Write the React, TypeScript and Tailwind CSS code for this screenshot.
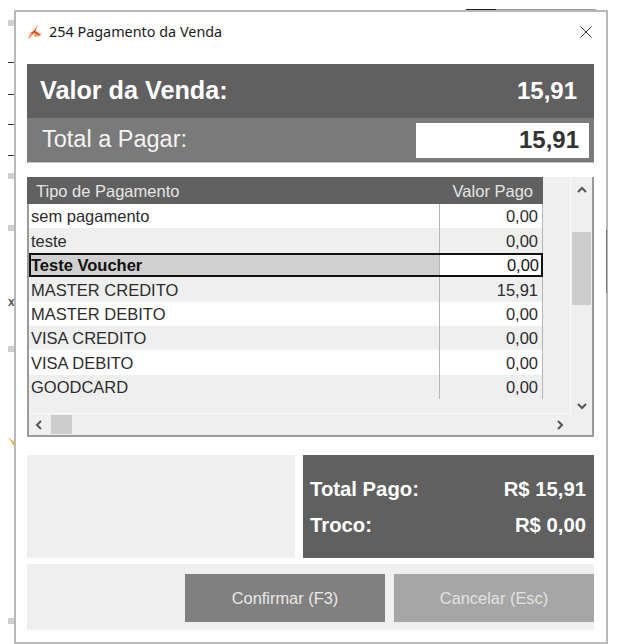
const rows = [
  { name: "sem pagamento", value: "0,00" },
  { name: "teste", value: "0,00" },
  { name: "Teste Voucher", value: "0,00", selected: true },
  { name: "MASTER CREDITO", value: "15,91" },
  { name: "MASTER DEBITO", value: "0,00" },
  { name: "VISA CREDITO", value: "0,00" },
  { name: "VISA DEBITO", value: "0,00" },
  { name: "GOODCARD", value: "0,00" },
];

function Chevron({ d }: { d: string }) {
  return (
    <svg width="10" height="10" viewBox="0 0 10 10" fill="none" stroke="#555" strokeWidth="2">
      <path d={d} />
    </svg>
  );
}

function Ticks() {
  const left = [
    { y: 20, h: 6, c: "#d0d0d0" },
    { y: 62, h: 1, c: "#333" },
    { y: 94, h: 1, c: "#333" },
    { y: 124, h: 1, c: "#333" },
    { y: 155, h: 1, c: "#333" },
    { y: 173, h: 6, c: "#d0d0d0" },
    { y: 225, h: 6, c: "#d0d0d0" },
    { y: 346, h: 6, c: "#d0d0d0" },
    { y: 618, h: 6, c: "#d0d0d0" },
  ];
  return (
    <>
      {left.map((t) => (
        <div key={t.y} className="absolute left-[8px] w-[6px]" style={{ top: t.y, height: t.h, background: t.c }} />
      ))}
      <div className="absolute left-[8px] top-[296px] text-[12px] leading-none font-bold font-['Liberation_Sans',sans-serif] text-[#555]">x</div>
      <svg className="absolute left-[8px] top-[437px]" width="6" height="9" viewBox="0 0 6 9">
        <path d="M0 0 L6 5 L6 9 Z" fill="#f0a830" />
      </svg>
      <div className="absolute left-[148px] top-[10px] h-px w-[318px] bg-[#bdbdbd]" />
      <div className="absolute left-[466px] top-[9px] h-[2px] w-[30px] bg-[#222]" />
      <div className="absolute left-[496px] top-[9px] h-[2px] w-[100px] bg-[#999]" />
      <div className="absolute left-[606px] top-[230px] z-10 w-px h-[63px] bg-[#777]" />
    </>
  );
}

export default function App() {
  return (
    <div className="relative w-[627px] h-[644px] bg-white pl-[14px] pt-[10px] font-['Liberation_Sans',sans-serif] overflow-hidden">
      <Ticks />
      <div className="relative w-[594px] h-[634px] border-2 border-[#b8b8b8] bg-white px-[11px]">
        <div className="h-[40px] flex items-center justify-between">
          <div className="flex items-center gap-[7px]">
            <svg width="15" height="16" viewBox="0 0 15 16">
              <path d="M11 0.5 L8.5 7 L14.5 11 L10.5 11 L7 9 L1 15 L3.5 9 L7.5 6 Z" fill="#e8481a" />
              <path d="M3.5 9 L1 15 L7 10 Z" fill="#f4a070" />
              <path d="M7 10 L14.5 11.5 L7.5 13 Z" fill="#f09a50" />
            </svg>
            <span className="font-['Noto_Sans',sans-serif] text-[14.4px] text-[#1a1a1a]">254 Pagamento da Venda</span>
          </div>
          <svg className="mr-[2px]" width="14" height="14" viewBox="0 0 14 14" fill="none" stroke="#333" strokeWidth="1">
            <path d="M1.5 1.5 L12.5 12.5 M12.5 1.5 L1.5 12.5" />
          </svg>
        </div>

        <div className="mt-[12px] w-[567px]">
          <div className="h-[54px] bg-[#606060] flex items-center justify-between pl-[13px] pr-[17px] text-white font-bold text-[24px]">
            <span className="text-[25.2px]">Valor da Venda:</span>
            <span>15,91</span>
          </div>
          <div className="h-[45px] bg-[#7a7a7a] border-b border-[#c4c4c4] flex items-center justify-between pl-[15px] pr-[5px] text-white">
            <span className="text-[23.5px] text-[#f4f4f4]">Total a Pagar:</span>
            <div className="w-[173px] h-[35px] bg-white flex items-center justify-end pr-[10px] text-[24px] font-bold text-[#333]">15,91</div>
          </div>
        </div>

        <div className="mt-[14px] w-[567px] h-[260px] border-2 border-t-0 border-[#9a9a9a] bg-[#efefef] text-[16.5px] relative flex flex-col">
          <div className="flex flex-1 min-h-0">
            <div className="w-[514px] shrink-0 flex flex-col">
              <div className="h-[27px] -ml-[2px] w-[516px] bg-[#606060] text-[#e6e6e6] flex items-center pt-[1px]">
                <span className="w-[411px] pl-[9px]">Tipo de Pagamento</span>
                <span className="w-[95px] text-right whitespace-nowrap">Valor Pago</span>
              </div>
              {rows.map((r, i) => {
                const stripe = i % 2 === 0 ? "bg-white" : "bg-[#efefef]";
                return r.selected ? (
                  <div key={r.name} className="h-[24.4px] flex border-[2px] border-[#111] bg-white text-[#111]">
                    <div className="w-[409px] bg-[#d0d0d0] font-bold pl-[0px] pt-[1px] flex items-center border-r border-[#b5b5b5]">{r.name}</div>
                    <div className="flex-1 flex items-center justify-end pr-[2px] pt-[1px]">{r.value}</div>
                  </div>
                ) : (
                  <div key={r.name} className={`h-[24.4px] flex text-[#2c2c2c] ${stripe}`}>
                    <div className="w-[411px] pl-[2px] pt-[1px] flex items-center border-r border-[#b5b5b5]">{r.name}</div>
                    <div className="flex-1 flex items-center justify-end pr-[4px] pt-[1px] border-r border-[#b5b5b5]">{r.value}</div>
                  </div>
                );
              })}
            </div>
            <div className="flex-1 flex justify-end">
              <div className="w-[22px] flex flex-col items-center pt-[8px] border-l border-[#fafafa]">
                <Chevron d="M1 7 L5 3 L9 7" />
                <div className="mt-[37px] w-[19px] h-[73px] bg-[#cdcdcd]" />
                <div className="mt-auto pb-[3px]">
                  <Chevron d="M1 3 L5 7 L9 3" />
                </div>
              </div>
            </div>
          </div>
          <div className="h-[21px] flex items-center pl-[5px] justify-between">
            <div className="flex items-center gap-[7px]">
              <Chevron d="M7 1 L3 5 L7 9" />
              <div className="w-[21px] h-[19px] bg-[#cdcdcd]" />
            </div>
            <div className="mr-[27px]">
              <Chevron d="M3 1 L7 5 L3 9" />
            </div>
          </div>
          <div className="absolute left-0 top-[236px] h-px w-[541px] bg-[#fafafa]" />
        </div>

        <div className="mt-[18px] w-[567px] h-[103px] flex gap-[8px]">
          <div className="w-[268px] bg-[#efefef]" />
          <div className="flex-1 bg-[#606060] text-white font-bold text-[20.3px] pl-[7px] pr-[8px] pt-[22px] flex flex-col gap-[11px]">
            <div className="flex justify-between h-[25px] items-center"><span>Total Pago:</span><span>R$ 15,91</span></div>
            <div className="flex justify-between h-[25px] items-center"><span>Troco:</span><span>R$ 0,00</span></div>
          </div>
        </div>

        <div className="mt-[6px] w-[567px] h-[66px] bg-[#efefef] flex justify-end gap-[9px] pt-[10px]">
          <button className="w-[200px] h-[48px] bg-[#808080] text-[#e8e8e8] text-[16.4px]">Confirmar (F3)</button>
          <button className="w-[200px] h-[48px] bg-[#a6a6a6] text-[#e2e2e2] text-[16.4px]">Cancelar (Esc)</button>
        </div>
      </div>
    </div>
  );
}
